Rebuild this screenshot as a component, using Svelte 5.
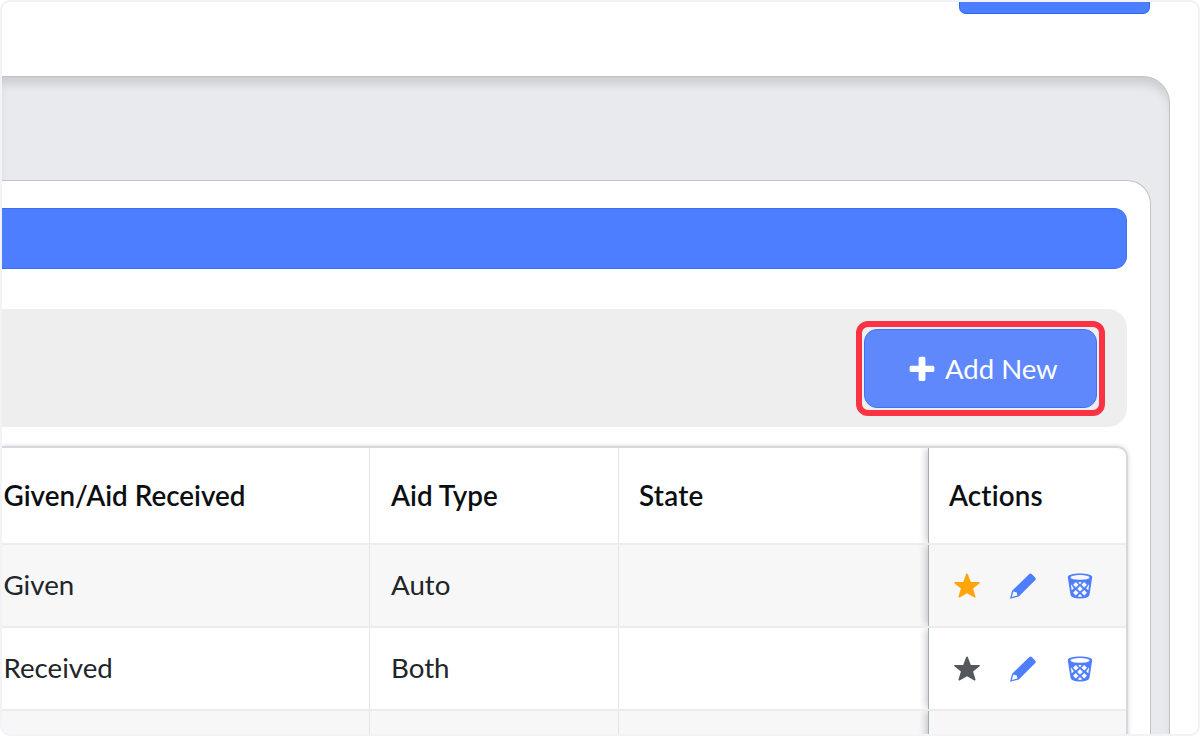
<script>
  const rows = [
    { aid: 'Given', type: 'Auto', state: '', starred: true },
    { aid: 'Received', type: 'Both', state: '', starred: false }
  ];
</script>

<div class="frame">
  <header><div class="top-button"></div></header>
  <section class="panel">
    <div class="card">
      <div class="title-bar"></div>
      <div class="toolbar">
        <div class="focus-ring">
          <button class="add">
            <svg width="26" height="26" viewBox="0 0 26 26"><path d="M11.200.7h3.600q1.600 0 1.600 1.600v7.400h7.400q1.600 0 1.600 1.600v3.200q0 1.600-1.600 1.600h-7.400v7.400q0 1.600-1.600 1.600h-3.600q-1.600 0-1.600-1.600v-7.400H2.200Q.6 16.100.6 14.500v-3.200q0-1.600 1.600-1.600h7.400V2.300Q9.600.7 11.200.7z" fill="#fff" /></svg>
            <span>Add New</span>
          </button>
        </div>
      </div>
      <div class="table">
        <div class="row head">
          <div class="cell first">Given/Aid Received</div>
          <div class="cell">Aid Type</div>
          <div class="cell state">State</div>
          <div class="cell actions">Actions</div>
        </div>
        {#each rows as row, i}
          <div class="row" class:striped={i % 2 === 0}>
            <div class="cell first">{row.aid}</div>
            <div class="cell">{row.type}</div>
            <div class="cell">{row.state}</div>
            <div class="cell actions icons">
              <svg class="star" class:on={row.starred} width="26" height="26" viewBox="0 0 26 26"><path d="M13 .6q.7 0 1 .9l2.800 7.400 8.300.2q1.400.2.500 1.200l-6.500 5.100 2.400 8.200q.1 1.500-1.200.8L13 20.200l-7.300 4.200q-1.300.7-1.200-.8l2.400-8.200L.4 10.300Q-.5 9.300.9 9.100l8.300-.2L12 1.500q.3-.9 1-.9z" /></svg>
              <svg width="26" height="26" viewBox="0 0 26 26"><path fill-rule="evenodd" d="M19.300 1.100q1.200-1 2.400 0l3.600 3.700q1 1.200 0 2.300L8.800 23.500 0 25.800 2.100 17.800zM3.400 18.600l-1.600 5.300 5.600-1.400-.6-3-3.400-.9z" fill="#4d7eff" /></svg>
              <svg width="26" height="26" viewBox="0 0 26 26">
                <path fill="#4d7eff" fill-rule="evenodd" d="M13 .6c6.800 0 12.200 1.200 12.200 3.700L22.500 21.800Q21.600 25.600 13 25.600T3.500 21.800L.8 4.300C.8 1.800 6.200.6 13 .6z
                  M13 2.100C7.500 2.100 3.600 3.100 3.600 4.400S7.500 6.700 13 6.700s9.400-1 9.400-2.300S18.500 2.100 13 2.100z
                  M8.800 9.100l2.800 2.700-2.800 2.800L6 11.800z M17.200 9.100l2.800 2.700-2.800 2.800-2.800-2.800z
                  M13 13.100l2.800 2.800-2.800 2.700-2.800-2.700z M3.800 11.100l3 4.100-2.100 2.300z M22.200 11.100l-3 4.100 2.100 2.300z
                  M8.800 17l2.800 2.800-2.800 2.800L6 19.800z M17.200 17l2.800 2.800-2.800 2.800-2.800-2.800z
                  M13 21.100l2.300 2.200-2.300.6-2.300-.6z M13 8.700l1.700.8L13 11.300l-1.700-1.800z" />
              </svg>
            </div>
          </div>
        {/each}
        <div class="row striped last">
          <div class="cell first"></div><div class="cell"></div><div class="cell"></div><div class="cell actions"></div>
        </div>
      </div>
    </div>
  </section>
</div>

<style>
  :global(body) { margin: 0; background: #fff; }
  * { box-sizing: border-box; }
  .frame {
    width: 1200px; height: 736px; overflow: hidden;
    border: 2px solid #f2f2f8; border-radius: 10px; background: #fff;
    font-family: Lato, sans-serif; font-size: 27.700px; line-height: 34px; color: #212529;
    font-variant-ligatures: none;
  }
  header { height: 74px; display: flex; justify-content: flex-end; padding-right: 48px; }
  .top-button {
    width: 191px; height: 12px; background: #4d7eff;
    border: 1px solid #256af7; border-top: 0; border-radius: 0 0 7px 7px;
  }
  .panel {
    width: 1168px; height: 700px; padding: 103px 18px 0 0;
    background: #e9eaee; border: solid #bfc1c3; border-width: 1px 1px 0 0;
    border-radius: 0 27px 0 0; box-shadow: inset 0 10px 10px -3px #cccdd0;
  }
  .card {
    height: 600px; padding: 27px 23px 0 0; background: #fff;
    border: solid #c2c3c5; border-width: 1px 1px 0 0; border-radius: 0 24px 0 0;
  }
  .title-bar {
    height: 61px; background: #4d7eff; border: 1px solid #3671fa; border-left: 0;
    border-radius: 0 13px 13px 0;
  }
  .toolbar {
    height: 118px; margin-top: 40px; padding: 12px 22px 0 0;
    display: flex; justify-content: flex-end; align-items: flex-start;
    background: #eee; border-radius: 0 19px 19px 0;
  }
  .focus-ring { width: 249px; height: 95px; padding: 2px; border: 6px solid #f93343; border-radius: 12px; }
  .add {
    width: 233px; height: 79px; padding: 1px 0 0 44px; margin: 0;
    display: flex; align-items: center; gap: 10px; justify-content: flex-start;
    background: #5f88fd; border: 1px solid #3973fb; border-radius: 13px;
    color: #fff; font: 400 27.500px/34px Lato, sans-serif; white-space: nowrap;
  }
  .table {
    margin: 19px -1px 0 0; border: solid #d4d9dc; border-width: 2px 2px 0 0;
    border-radius: 0 11px 0 0; overflow: hidden; box-shadow: 0 0 4px rgba(50, 65, 75, .22);
  }
  .row { display: grid; grid-template-columns: 367px 249.400px 309.600px 1fr; height: 83px; overflow: hidden; }
  .head { height: 95px; font-weight: 600; font-size: 27.800px; color: #0c0f12; }
  .row:not(.head) { border-top: 2px solid #ececef; }
  .striped { background: #f7f7f7; }
  .last { height: 100px; }
  .cell { display: flex; align-items: center; padding: 0 0 0 21px; border-left: 1px solid #e3e4e6; white-space: nowrap; }
  .row:not(.head) .cell:not(.icons) { padding-bottom: 1px; }
  .cell.first { padding-left: 1.500px; border-left: 0; }
  .cell.state { padding-left: 19.500px; letter-spacing: .3px; }
  .cell.actions {
    padding-left: 20px; background: #fff; border-left: 1px solid #a5acb0;
    box-shadow: -3px 0 7px -1px rgba(65, 75, 85, .3);
  }
  .head .actions { letter-spacing: .15px; }
  .striped .actions { background: #f7f7f7; }
  .cell.icons { padding-left: 25px; gap: 30.500px; }
  .star { fill: #54585a; }
  .star.on { fill: #ffa50a; }
</style>
